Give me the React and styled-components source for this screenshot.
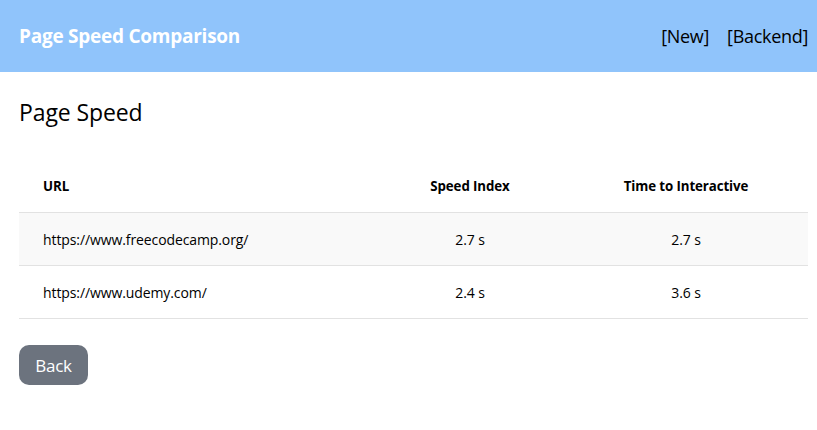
import React from "react";
import styled, { createGlobalStyle } from "styled-components";

const Global = createGlobalStyle`
  body { margin: 0; font-family: "Open Sans", "Noto Sans", sans-serif; color: #000; background: #fff; }
  * { box-sizing: border-box; }
`;

const Header = styled.header`
  height: 72px;
  background: #90c4fb;
  display: flex;
  align-items: center;
  justify-content: space-between;
  padding: 0 9px 0 19px;
`;

const Brand = styled.div`
  color: #fff;
  font-size: 19px;
  font-weight: 700;
  letter-spacing: -0.25px;
`;

const Nav = styled.nav`
  display: flex;
  gap: 18px;
`;

const NavLink = styled.a`
  font-size: 18px;
  color: #000;
  text-decoration: none;
  letter-spacing: -0.3px;
`;

const Main = styled.main`
  padding: 24px 9px 0 19px;
`;

const Title = styled.h1`
  margin: 0 0 32px;
  font-size: 23px;
  font-weight: 400;
  line-height: 32px;
  letter-spacing: -0.1px;
`;

const Row = styled.div`
  display: grid;
  grid-template-columns: 357px 188px 1fr;
  height: 53px;
  align-items: center;
  border-bottom: 1px solid #e2e2e2;
  background: ${(p) => (p.$striped ? "#f9f9f9" : "transparent")};
  font-size: ${(p) => (p.$head ? "13.3px" : "14px")};
  font-weight: ${(p) => (p.$head ? 700 : 400)};
`;

const Cell = styled.div`
  padding: 0 24px;
  text-align: ${(p) => (p.$center ? "center" : "left")};
  letter-spacing: -0.1px;
`;

const BackButton = styled.button`
  margin-top: 26px;
  width: 69px;
  height: 40px;
  border: none;
  border-radius: 10px;
  background: #6c737e;
  color: #fff;
  font-family: inherit;
  font-size: 17px;
  letter-spacing: -0.2px;
  cursor: pointer;
`;

const rows = [
  { url: "https://www.freecodecamp.org/", si: "2.7 s", tti: "2.7 s" },
  { url: "https://www.udemy.com/", si: "2.4 s", tti: "3.6 s" },
];

export default function App() {
  return (
    <>
      <Global />
      <Header>
        <Brand>Page Speed Comparison</Brand>
        <Nav>
          <NavLink href="#">[New]</NavLink>
          <NavLink href="#">[Backend]</NavLink>
        </Nav>
      </Header>
      <Main>
        <Title>Page Speed</Title>
        <div>
          <Row $head>
            <Cell>URL</Cell>
            <Cell $center>Speed Index</Cell>
            <Cell $center>Time to Interactive</Cell>
          </Row>
          {rows.map((r, i) => (
            <Row key={r.url} $striped={i % 2 === 0}>
              <Cell>{r.url}</Cell>
              <Cell $center>{r.si}</Cell>
              <Cell $center>{r.tti}</Cell>
            </Row>
          ))}
        </div>
        <BackButton>Back</BackButton>
      </Main>
    </>
  );
}
